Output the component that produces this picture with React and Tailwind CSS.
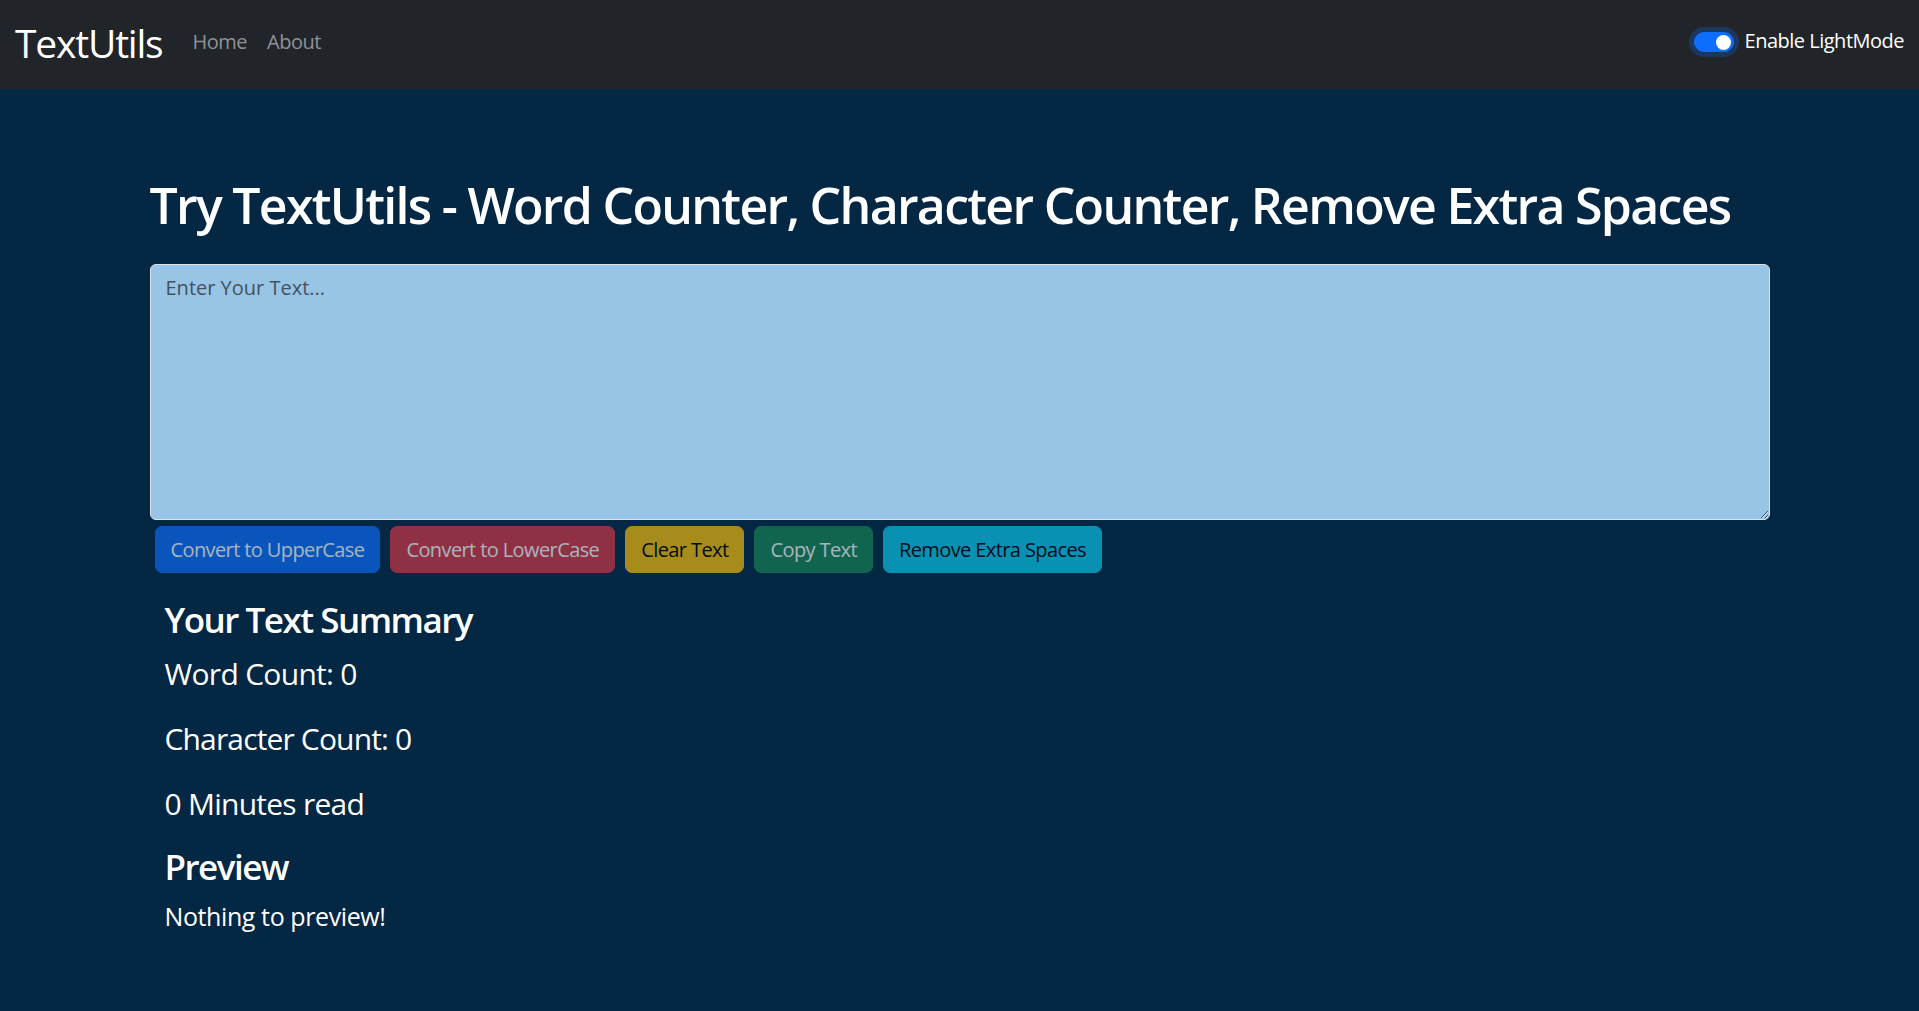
import React from "react";

const buttons = [
  { label: "Convert to UpperCase", cls: "bg-[#0d6efd] border-[#0d6efd] text-white" },
  { label: "Convert to LowerCase", cls: "bg-[#dc3545] border-[#dc3545] text-white" },
  { label: "Clear Text", cls: "bg-[#ffc107] border-[#ffc107] text-black" },
  { label: "Copy Text", cls: "bg-[#198754] border-[#198754] text-white" },
  { label: "Remove Extra Spaces", cls: "bg-[#0dcaf0] border-[#0dcaf0] text-black" },
];

export default function App() {
  return (
    <div
      className="min-h-[1011px] flex flex-col bg-[#042743] text-white"
      style={{ fontFamily: '"Open Sans", "Noto Sans", sans-serif' }}
    >
      <nav className="h-[89px] shrink-0 bg-[#212529] flex items-start px-[15px]">
        <a className="mt-[23px] text-[39px] leading-[40px] text-white tracking-[-1.2px]">TextUtils</a>
        <ul className="flex ml-[20px] mt-[27px]">
          <li className="px-[10px] text-[20px] leading-[30px] text-[#8f9295] tracking-[-0.5px]">Home</li>
          <li className="px-[10px] text-[20px] leading-[30px] text-[#8f9295] tracking-[-0.5px]">About</li>
        </ul>
        <div className="ml-auto mt-[26px] flex items-start">
          <div className="mt-[6px] w-[40px] h-[20px] rounded-full bg-[#0d6efd] border border-[#0d6efd] shadow-[0_0_0_5px_rgba(13,110,253,0.25)] flex items-center justify-end pr-[1.5px]">
            <div className="w-[15px] h-[15px] rounded-full bg-white" />
          </div>
          <label className="ml-[11px] text-[20px] leading-[30px] text-white tracking-[-0.5px]">Enable LightMode</label>
        </div>
      </nav>

      <main className="flex-1">
        <div className="w-[1620px] mx-auto pt-[86px]">
          <h1 className="text-[50px] leading-[60px] font-semibold whitespace-nowrap tracking-[-1.7px]">
            Try TextUtils - Word Counter, Character Counter, Remove Extra Spaces
          </h1>
          <textarea
            className="mt-[29px] block w-full h-[256px] rounded-[6px] border border-[#dee2e6] bg-[#98c4e6] px-[15px] py-[7.5px] text-[20px] leading-[30px] text-[#212529] placeholder:text-[#44525e] outline-none"
            placeholder="Enter Your Text..."
          />
          <div className="flex gap-[10px] pl-[5px] mt-[6px]">
            {buttons.map((b) => (
              <button
                key={b.label}
                className={`h-[47px] px-[15px] rounded-[7px] border text-[20px] leading-[30px] opacity-65 tracking-[-0.6px] ${b.cls}`}
              >
                {b.label}
              </button>
            ))}
          </div>
          <div className="px-[15px] mt-[26px]">
            <h3 className="text-[35px] leading-[42px] font-semibold mb-[10px] tracking-[-1.5px]">Your Text Summary</h3>
            <p className="text-[30px] leading-[45px] mb-[20px] tracking-[-0.7px]">Word Count: 0</p>
            <p className="text-[30px] leading-[45px] mb-[20px] tracking-[-0.85px]">Character Count: 0</p>
            <p className="text-[30px] leading-[45px] mb-[20px] tracking-[-0.75px]">0 Minutes read</p>
            <h3 className="text-[35px] leading-[42px] font-semibold mb-[10px] tracking-[-1.5px]">Preview</h3>
            <p className="text-[25px] leading-[37.5px] tracking-[-0.4px]">Nothing to preview!</p>
          </div>
        </div>
      </main>
    </div>
  );
}
